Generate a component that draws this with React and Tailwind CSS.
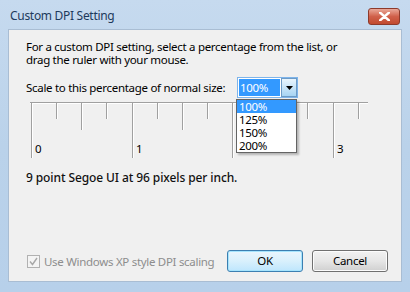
import React from "react";

const FONT = { fontFamily: '"Noto Sans", "Liberation Sans", sans-serif' };

// ruler geometry: one unit = 100.5px, quarter ticks
const UNIT = 100.5;

function Ruler() {
    const ticks = [];
    for (let i = 0; i <= 13; i++) {
        const x = Math.round(1 + (i * UNIT) / 4) + 0.5;
        let y2 = 17;
        if (i % 4 === 0) y2 = 56;
        else if (i % 2 === 0) y2 = 28;
        ticks.push(
            <g key={i}>
                <line x1={x} y1={1} x2={x} y2={y2} stroke="#a0a0a0" />
                <line x1={x + 1} y1={1} x2={x + 1} y2={y2} stroke="#ffffff" />
            </g>
        );
    }
    // "2" sits under the open list, so only 0, 1 and 3 show
    const labels = [0, 1, 3];
    return (
        <svg width="340" height="56" className="block">
            <line x1="0" y1="0.5" x2="338" y2="0.5" stroke="#a0a0a0" />
            <line x1="0" y1="1.5" x2="338" y2="1.5" stroke="#ffffff" />
            {ticks}
            {labels.map((n) => (
                <text
                    key={n}
                    x={Math.round(1 + n * UNIT) + 4}
                    y={51}
                    fontSize="11.5"
                    fill="#000"
                    style={FONT}
                >
                    {n}
                </text>
            ))}
        </svg>
    );
}

function ComboBox() {
    return (
        <div className="flex h-[21px] w-[61px] items-center border border-[#7eb4ea] bg-white pl-[1px]">
            <div className="flex h-[17px] w-[41px] items-center bg-[#3399ff] pl-[1px] text-[11.5px] leading-none text-white">
                100%
            </div>
            <div className="ml-[1px] flex h-[19px] w-[16px] items-center justify-center border border-[#6d9bc6] bg-gradient-to-b from-[#e9f5fd] to-[#a7d4f3]">
                <svg width="7" height="4" viewBox="0 0 7 4">
                    <path d="M0 0h7L3.5 4z" fill="#000" />
                </svg>
            </div>
        </div>
    );
}

function DropList() {
    const items = ["100%", "125%", "150%", "200%"];
    return (
        <div className="absolute left-[227px] top-[69px] w-[61px] border border-[#646464] bg-white shadow-[2px_2px_2px_rgba(0,0,0,0.25)]">
            {items.map((it, i) => (
                <div
                    key={it}
                    className={`h-[13px] pl-[2px] text-[11.5px] leading-[13px] ${
                        i === 0 ? "bg-[#3399ff] text-white" : "text-black"
                    }`}
                >
                    {it}
                </div>
            ))}
        </div>
    );
}

export default function App() {
    return (
        <div
            className="flex h-[292px] w-[410px] flex-col bg-gradient-to-b from-[#c6daef] via-[#bad2ea] to-[#b7d0ea]"
            style={FONT}
        >
            {/* title bar */}
            <div className="flex h-[29px] items-start justify-between pl-[10px] pr-[10px]">
                <div className="mt-[7px] whitespace-nowrap text-[12px] leading-[18px] tracking-[-0.3px] text-[#1e3a5c]">
                    Custom DPI Setting
                </div>
                <div className="mt-[8px] flex h-[17px] w-[32px] items-center justify-center rounded-[3px] border border-[#8d3a2b] bg-gradient-to-b from-[#e9a899] via-[#d0604a] to-[#c14a2f]">
                    <svg width="11" height="9" viewBox="0 0 11 9">
                        <path
                            d="M1 0.5 L10 8.5 M10 0.5 L1 8.5"
                            stroke="#ffffff"
                            strokeWidth="2.4"
                            strokeLinecap="round"
                        />
                    </svg>
                </div>
            </div>

            {/* client area */}
            <div className="relative mx-[8px] flex h-[253px] flex-col border border-[#a9bdd3] bg-[#f0f0f0] text-[11.5px] tracking-[-0.3px] text-black">
                <p className="whitespace-nowrap pl-[17px] pt-[10px] leading-[13px]">
                    For a custom DPI setting, select a percentage from the list, or
                    <br />
                    drag the ruler with your mouse.
                </p>

                <div className="mt-[11px] flex h-[21px] items-center">
                    <div className="w-[228px] whitespace-nowrap pl-[17px] leading-[13px]">
                        Scale to this percentage of normal size:
                    </div>
                    <ComboBox />
                </div>

                <div className="ml-[21px] mt-[4px]">
                    <Ruler />
                </div>

                <div className="mt-[13px] whitespace-nowrap pl-[17px] text-[12px] font-medium leading-[14px] tracking-[-0.1px] text-[#111]">
                    9 point Segoe UI at 96 pixels per inch.
                </div>

                <div className="mt-auto mb-[9px] flex items-center">
                    <div className="ml-[18px] flex items-center gap-[4px] whitespace-nowrap text-[#8d8d8d]">
                        <div className="flex h-[13px] w-[13px] items-center justify-center border border-[#b1b1b1] bg-[#f4f4f4]">
                            <svg width="9" height="9" viewBox="0 0 9 9">
                                <path d="M1 4.5 L3.5 7.5 L8 1" stroke="#a8a8a8" strokeWidth="1.4" fill="none" />
                            </svg>
                        </div>
                        <span className="leading-[13px]">Use Windows XP style DPI scaling</span>
                    </div>
                    <div className="ml-auto mr-[13px] flex gap-[9px]">
                        <button className="h-[22px] w-[76px] rounded-[3px] border border-[#3c7fb1] bg-gradient-to-b from-[#eaf6fd] via-[#d9f0fc] to-[#bee6fd] text-[11.5px] leading-none text-black shadow-[inset_0_0_0_1px_#a6e4fd]">
                            OK
                        </button>
                        <button className="h-[22px] w-[76px] rounded-[3px] border border-[#707070] bg-gradient-to-b from-[#f2f2f2] via-[#e6e6e6] to-[#d0d0d0] text-[11.5px] leading-none text-black shadow-[inset_0_0_0_1px_#fcfcfc]">
                            Cancel
                        </button>
                    </div>
                </div>

                <DropList />
            </div>
        </div>
    );
}
